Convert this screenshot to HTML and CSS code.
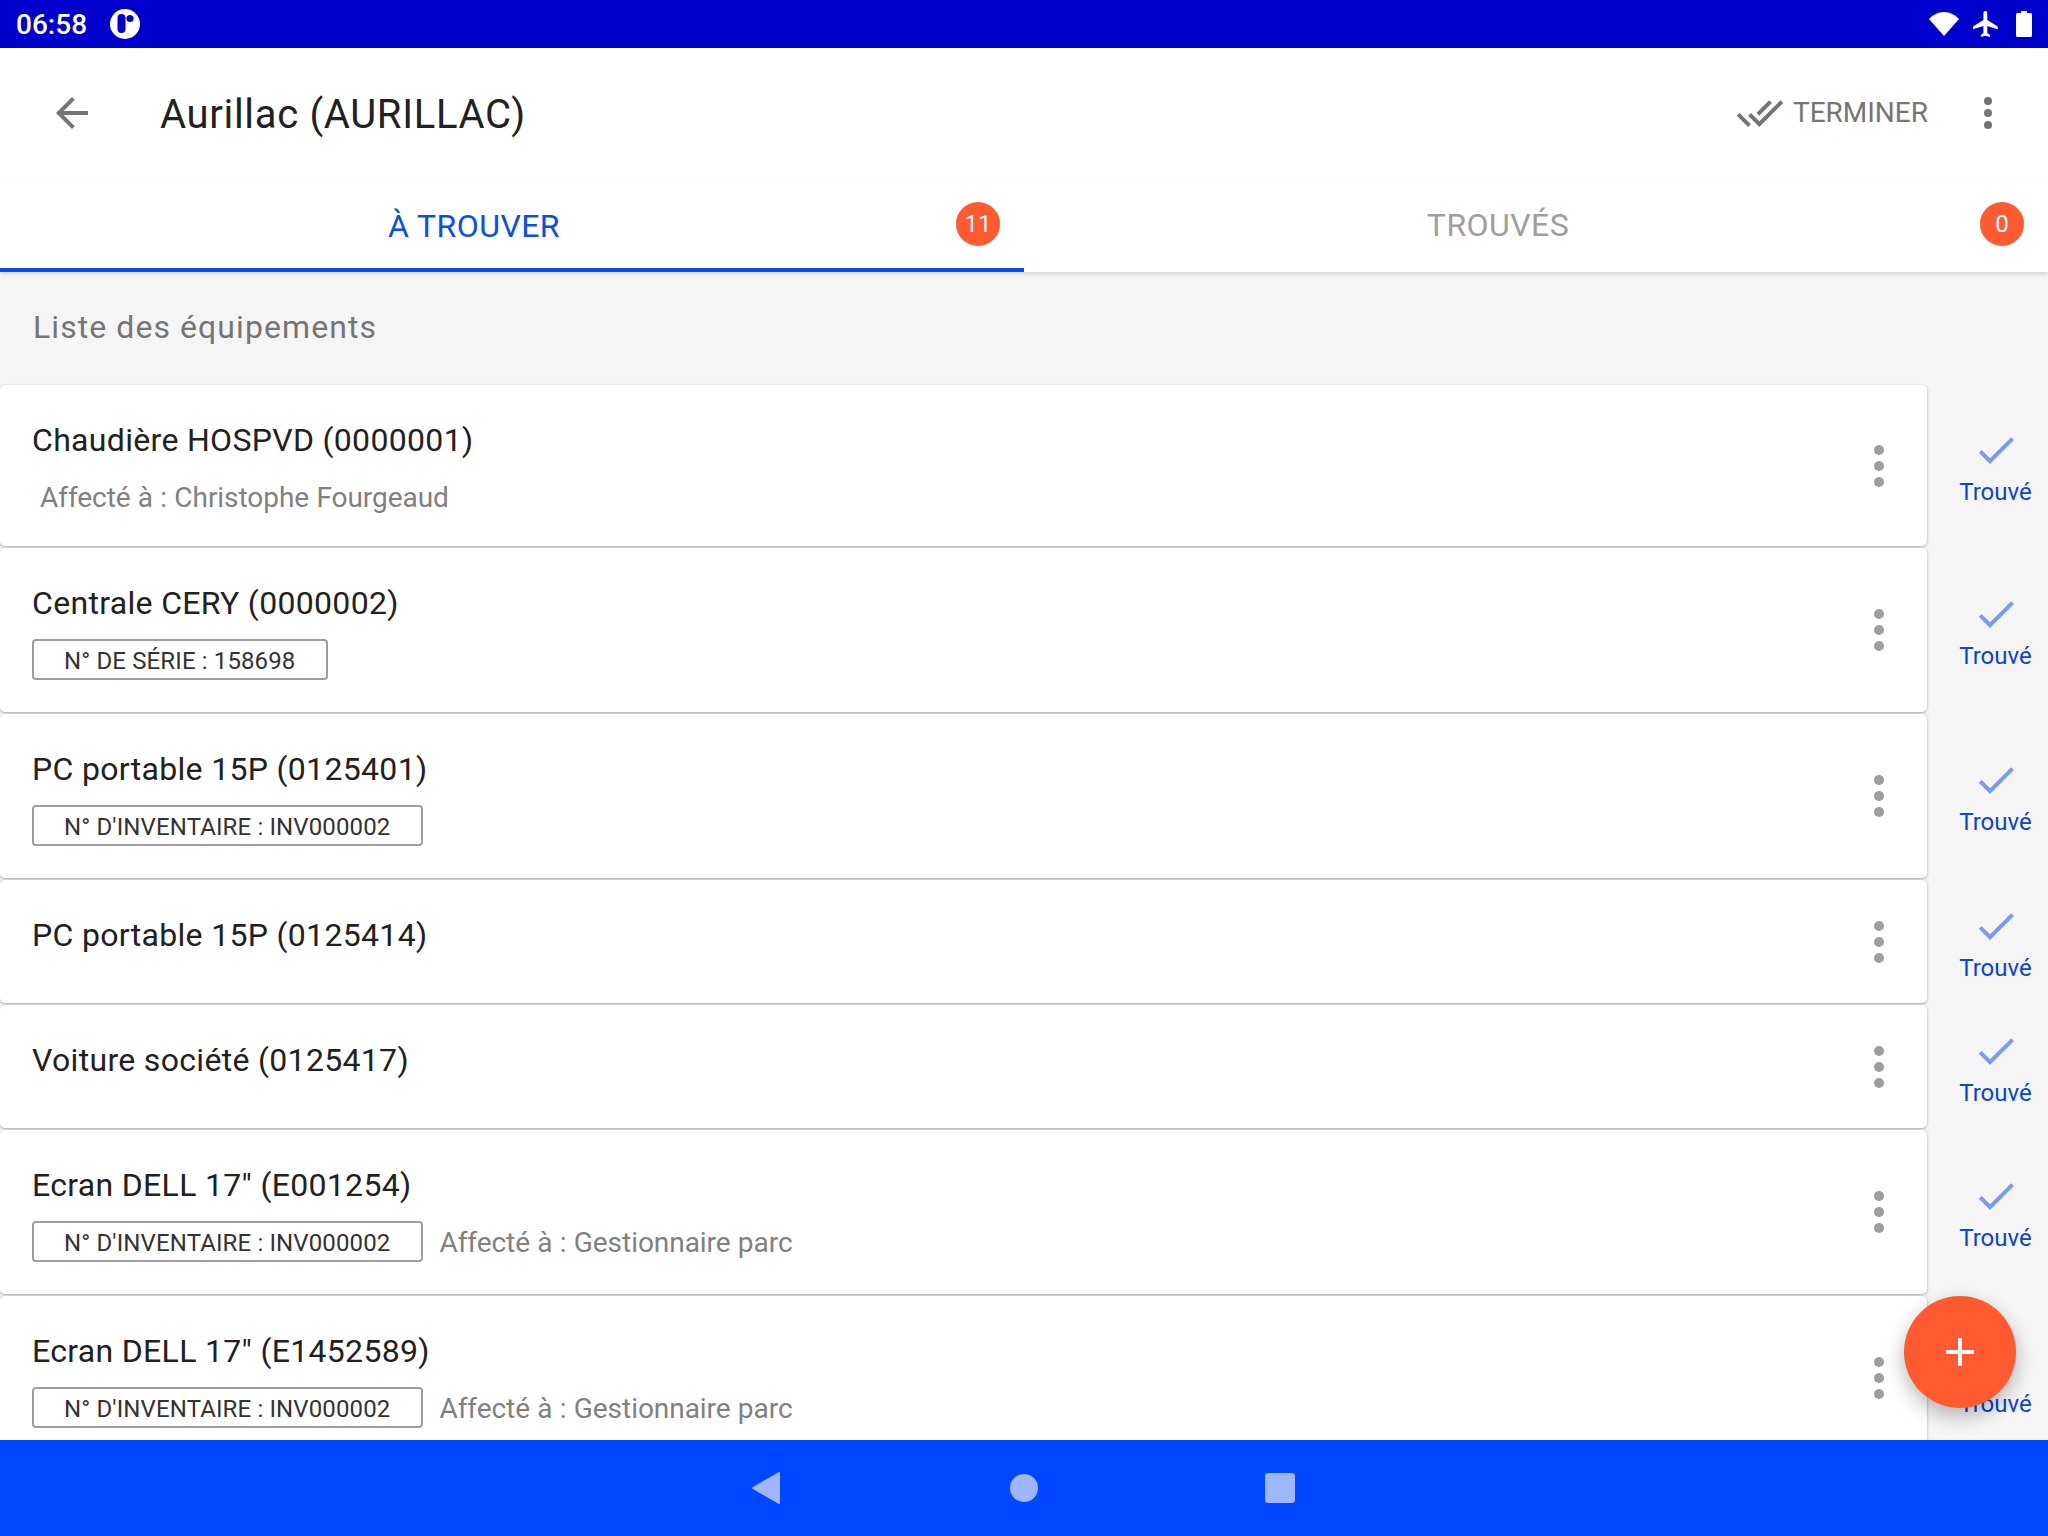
FILE: index.html
```html
<!DOCTYPE html>
<html lang="fr">
<head>
<meta charset="utf-8">
<title>Aurillac</title>
<link rel="stylesheet" href="styles.css">
</head>
<body>
<div class="app">
  <div class="status">
    <span class="time">06:58</span>
    <svg class="logo" viewBox="0 0 30 30"><circle cx="15" cy="15" r="15" fill="#fff"/><rect x="7.500" y="5" width="8" height="19" rx="4" fill="#0000cc"/><circle cx="20" cy="9.500" r="3.600" fill="#0000cc"/></svg>
    <span class="spacer"></span>
    <svg class="st-wifi" viewBox="0 0 30 24"><path d="M15 24 0 7C3 3.500 9 0 15 0s12 3.500 15 7z" fill="#fff"/></svg>
    <svg class="st-plane" viewBox="2 2 20 20"><path fill="#fff" d="M21 16v-2l-8-5V3.500c0-.83-.67-1.500-1.500-1.500S10 2.670 10 3.500V9l-8 5v2l8-2.500V19l-2 1.500V22l3.500-1 3.500 1v-1.500L13 19v-5.500l8 2.500z"/></svg>
    <svg class="st-batt" viewBox="0 0 16 26"><path fill="#fff" d="M5 0h6v2h3.500a1.500 1.500 0 0 1 1.500 1.500V24.500a1.500 1.500 0 0 1-1.500 1.500H1.500A1.500 1.500 0 0 1 0 24.500V3.500A1.500 1.500 0 0 1 1.500 2H5z"/></svg>
  </div>

  <header class="toolbar">
    <svg class="back" viewBox="4 4 16 16"><path fill="#757575" d="M20 11H7.830l5.590-5.590L12 4l-8 8 8 8 1.410-1.410L7.830 13H20z"/></svg>
    <h1 class="title">Aurillac (AURILLAC)</h1>
    <span class="spacer"></span>
    <svg class="done-all" viewBox="0 4 24 16"><path fill="#757575" d="M18 7l-1.410-1.410-6.340 6.340 1.410 1.410L18 7zm4.240-1.410L11.660 16.170 7.480 12l-1.410 1.410L11.660 19l12-12-1.420-1.410zM.41 13.410L6 19l1.410-1.410L1.830 12 .41 13.410z"/></svg>
    <span class="finish">TERMINER</span>
    <svg class="kebab-top" viewBox="0 0 8 32"><circle cx="4" cy="4" r="4" fill="#757575"/><circle cx="4" cy="16" r="4" fill="#757575"/><circle cx="4" cy="28" r="4" fill="#757575"/></svg>
  </header>

  <nav class="tabs">
    <div class="tab tab-active"><span>À TROUVER</span><b class="badge">11</b></div>
    <div class="tab"><span>TROUVÉS</span><b class="badge">0</b></div>
  </nav>

  <main class="content">
    <h2 class="section">Liste des équipements</h2>
    <div class="list">

      <div class="row row-first">
        <article class="card">
          <div class="info">
            <div class="name">Chaudière HOSPVD (0000001)</div>
            <div class="meta"><span class="owner owner-solo">Affecté à : Christophe Fourgeaud</span></div>
          </div>
          <svg class="kebab" viewBox="0 0 10 42"><circle cx="5" cy="5" r="5"/><circle cx="5" cy="21" r="5"/><circle cx="5" cy="37" r="5"/></svg>
        </article>
        <div class="found"><svg class="check" viewBox="0 0 48 48"><path d="M18 33.340 9.660 25l-2.840 2.820L18 39l24-24-2.820-2.820z"/></svg><span>Trouvé</span></div>
      </div>

      <div class="row">
        <article class="card">
          <div class="info">
            <div class="name">Centrale CERY (0000002)</div>
            <div class="meta"><span class="chip">N° DE SÉRIE : 158698</span></div>
          </div>
          <svg class="kebab" viewBox="0 0 10 42"><circle cx="5" cy="5" r="5"/><circle cx="5" cy="21" r="5"/><circle cx="5" cy="37" r="5"/></svg>
        </article>
        <div class="found"><svg class="check" viewBox="0 0 48 48"><path d="M18 33.340 9.660 25l-2.840 2.820L18 39l24-24-2.820-2.820z"/></svg><span>Trouvé</span></div>
      </div>

      <div class="row">
        <article class="card">
          <div class="info">
            <div class="name">PC portable 15P (0125401)</div>
            <div class="meta"><span class="chip">N° D'INVENTAIRE : INV000002</span></div>
          </div>
          <svg class="kebab" viewBox="0 0 10 42"><circle cx="5" cy="5" r="5"/><circle cx="5" cy="21" r="5"/><circle cx="5" cy="37" r="5"/></svg>
        </article>
        <div class="found"><svg class="check" viewBox="0 0 48 48"><path d="M18 33.340 9.660 25l-2.840 2.820L18 39l24-24-2.820-2.820z"/></svg><span>Trouvé</span></div>
      </div>

      <div class="row row-short">
        <article class="card">
          <div class="info">
            <div class="name">PC portable 15P (0125414)</div>
          </div>
          <svg class="kebab" viewBox="0 0 10 42"><circle cx="5" cy="5" r="5"/><circle cx="5" cy="21" r="5"/><circle cx="5" cy="37" r="5"/></svg>
        </article>
        <div class="found"><svg class="check" viewBox="0 0 48 48"><path d="M18 33.340 9.660 25l-2.840 2.820L18 39l24-24-2.820-2.820z"/></svg><span>Trouvé</span></div>
      </div>

      <div class="row row-short">
        <article class="card">
          <div class="info">
            <div class="name">Voiture société (0125417)</div>
          </div>
          <svg class="kebab" viewBox="0 0 10 42"><circle cx="5" cy="5" r="5"/><circle cx="5" cy="21" r="5"/><circle cx="5" cy="37" r="5"/></svg>
        </article>
        <div class="found"><svg class="check" viewBox="0 0 48 48"><path d="M18 33.340 9.660 25l-2.840 2.820L18 39l24-24-2.820-2.820z"/></svg><span>Trouvé</span></div>
      </div>

      <div class="row">
        <article class="card">
          <div class="info">
            <div class="name">Ecran DELL 17" (E001254)</div>
            <div class="meta"><span class="chip">N° D'INVENTAIRE : INV000002</span><span class="owner">Affecté à : Gestionnaire parc</span></div>
          </div>
          <svg class="kebab" viewBox="0 0 10 42"><circle cx="5" cy="5" r="5"/><circle cx="5" cy="21" r="5"/><circle cx="5" cy="37" r="5"/></svg>
        </article>
        <div class="found"><svg class="check" viewBox="0 0 48 48"><path d="M18 33.340 9.660 25l-2.840 2.820L18 39l24-24-2.820-2.820z"/></svg><span>Trouvé</span></div>
      </div>

      <div class="row">
        <article class="card">
          <div class="info">
            <div class="name">Ecran DELL 17" (E1452589)</div>
            <div class="meta"><span class="chip">N° D'INVENTAIRE : INV000002</span><span class="owner">Affecté à : Gestionnaire parc</span></div>
          </div>
          <svg class="kebab" viewBox="0 0 10 42"><circle cx="5" cy="5" r="5"/><circle cx="5" cy="21" r="5"/><circle cx="5" cy="37" r="5"/></svg>
        </article>
        <div class="found"><svg class="check" viewBox="0 0 48 48"><path d="M18 33.340 9.660 25l-2.840 2.820L18 39l24-24-2.820-2.820z"/></svg><span>Trouvé</span></div>
      </div>

    </div>
    <button class="fab" type="button" aria-label="Ajouter"><svg viewBox="0 0 28 28"><path fill="#fff" d="M12 0h4v12h12v4H16v12h-4V16H0v-4h12z"/></svg></button>
  </main>

  <footer class="navbar">
    <svg class="nav-back" viewBox="0 0 28 32"><path d="M27 1v30L1 16z" stroke-width="2" stroke-linejoin="round"/></svg>
    <span class="nav-home"></span>
    <span class="nav-recent"></span>
  </footer>
</div>
</body>
</html>
```

FILE: styles.css
```css
* { box-sizing: border-box; }
html, body { margin: 0; padding: 0; }
body { font-family: Roboto, "Liberation Sans", sans-serif; background: #fff; }

.app { width: 2048px; height: 1536px; display: flex; flex-direction: column; overflow: hidden; }
.spacer { flex: 1; }

/* Status bar */
.status { height: 48px; flex: none; background: #0000cc; display: flex; align-items: center; padding: 0 16px; color: #fff; }
.time { font-size: 28px; font-weight: 500; width: 70px; letter-spacing: 0; }
.logo { width: 30px; height: 30px; margin-left: 24px; }
.st-wifi { width: 30px; height: 24px; }
.st-plane { width: 26px; height: 26px; margin-left: 14px; }
.st-batt { width: 16px; height: 26px; margin-left: 17px; }

/* Toolbar */
.toolbar { height: 132px; flex: none; background: #fff; display: flex; align-items: center; padding: 0 0 3px 56px; }
.back { width: 32px; height: 32px; flex: none; }
.title { margin: 4px 0 0 72px; font-size: 40px; font-weight: 400; color: #212121; letter-spacing: 0.68px; }
.done-all { width: 48px; height: 32px; flex: none; }
.finish { font-size: 28px; color: #757575; margin-left: 9px; }
.kebab-top { width: 8px; height: 32px; flex: none; margin: 0 56px 0 56px; }

/* Tabs */
.tabs { height: 92px; flex: none; display: flex; background: #fff; box-shadow: 0 2px 4px rgba(0,0,0,.14); position: relative; z-index: 2; }
.tab { flex: 1; position: relative; display: flex; align-items: center; justify-content: center; padding: 0 76px 2px 0; font-size: 32px; letter-spacing: 0.45px; color: #9e9e9e; }
.tab-active { color: #0a4fee; border-bottom: 4px solid #0a4fee; padding-bottom: 0; }
.tab-active span { margin-top: 4px; }
.badge { position: absolute; right: 24px; top: 22px; width: 44px; height: 44px; border-radius: 50%; background: #ff5a30; color: #fff; font-weight: 400; font-size: 24px; letter-spacing: 0; display: flex; align-items: center; justify-content: center; }

/* Content */
.content { flex: 1; min-height: 0; background: #f5f5f5; position: relative; overflow: hidden; }
.section { margin: 0; height: 113px; padding: 37px 0 0 33px; font-size: 32px; line-height: 36px; font-weight: 400; color: #757575; letter-spacing: 1.07px; }
.list { display: flex; flex-direction: column; }
.row { display: flex; height: 166px; flex: none; padding-bottom: 2px; }
.row-first { height: 163px; }
.row-short { height: 125px; }
.card { width: 1927px; flex: none; background: #fff; border-radius: 5px; box-shadow: 0 1px 3px rgba(0,0,0,.32); display: flex; align-items: center; padding: 0 43px 0 32px; }
.info { flex: 1; min-width: 0; align-self: flex-start; padding-top: 36px; }
.name { font-size: 32px; line-height: 38px; color: #212121; letter-spacing: 0.32px; }
.meta { display: flex; align-items: center; margin-top: 17px; height: 41px; }
.chip { height: 41px; border: 2px solid #9e9e9e; border-radius: 4px; padding: 0 31px 0 30px; font-size: 24px; letter-spacing: 0.13px; line-height: 40px; color: #333; }
.owner { font-size: 28px; letter-spacing: -0.05px; word-spacing: 0.4px; color: #808080; margin: 2px 0 0 16px; }
.owner-solo { margin-left: 8px; }
.kebab { width: 10px; height: 42px; flex: none; fill: #9e9e9e; }

.found { flex: 1; display: flex; flex-direction: column; align-items: center; justify-content: center; color: #0a44d8; font-size: 24px; line-height: 30px; padding-left: 16px; }
.check { width: 48px; height: 48px; fill: #7a9cf0; margin-bottom: 4px; }

.fab { position: absolute; left: 1904px; top: 1024px; width: 112px; height: 112px; border: 0; border-radius: 50%; background: #ff5a30; box-shadow: 0 8px 20px rgba(0,0,0,.28); display: flex; align-items: center; justify-content: center; padding: 0; }
.fab svg { width: 28px; height: 28px; }

/* Navigation bar */
.navbar { height: 96px; flex: none; background: #0047ff; display: flex; align-items: center; justify-content: center; padding-right: 2px; position: relative; z-index: 3; }
.nav-back { width: 28px; height: 32px; fill: #a0b6fa; stroke: #a0b6fa; margin-right: 230px; }
.nav-home { width: 28px; height: 28px; border-radius: 50%; background: #a0b6fa; }
.nav-recent { width: 30px; height: 30px; border-radius: 3px; background: #a0b6fa; margin-left: 227px; }
```
